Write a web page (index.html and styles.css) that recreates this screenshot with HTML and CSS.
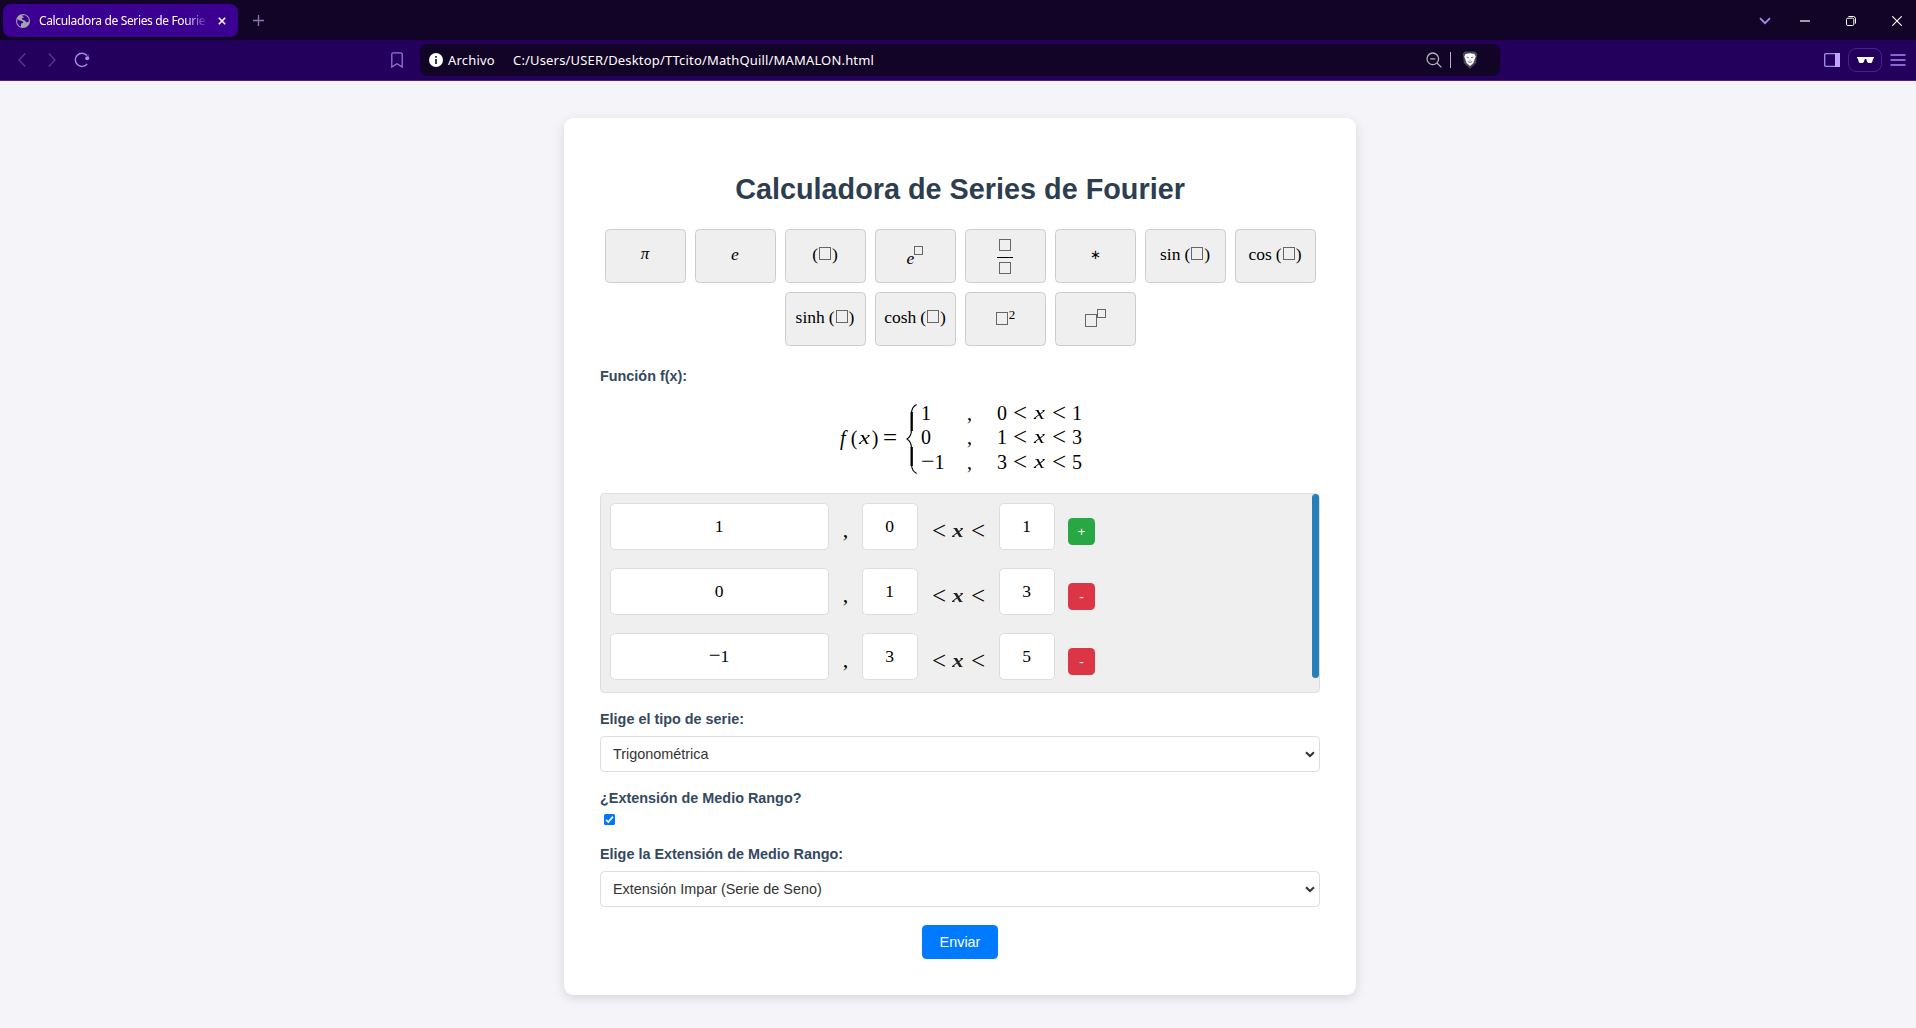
FILE: index.html
```html
<!DOCTYPE html>
<html lang="es">
<head>
<meta charset="utf-8">
<title>Calculadora de Series de Fourier</title>
<link rel="stylesheet" href="styles.css">
</head>
<body>
<header class="browser">
  <div class="tabbar">
    <div class="tab">
      <svg width="14" height="14" viewBox="0 0 14 14"><circle cx="7" cy="7" r="7" fill="#a3a1ab"/><path d="M1.3 5.2 4 6.6 6.6 7.2 7.2 9 5 9.4 5 12.6 3.4 12 1.2 9zM5.8 1.5 9.4 1.3 12.4 4 12.8 7.6 10.6 8.4 8.8 6.4 6.2 5.6 5.8 4.2 8 3.4z" fill="#3b0091"/></svg>
      <span class="tab-title">Calculadora de Series de Fourie</span>
      <svg class="tab-close" width="8" height="8" viewBox="0 0 8 8"><path d="M.8.8 7.2 7.2M7.2.8.8 7.2" stroke="#fff" stroke-width="1.6"/></svg>
    </div>
    <svg class="newtab" width="11" height="11" viewBox="0 0 11 11"><path d="M5.5 0V11M0 5.5H11" stroke="#8877b8" stroke-width="1.3"/></svg>
    <div class="window-controls">
      <svg width="12" height="8" viewBox="0 0 12 8"><path d="M1 1.2 6 6.2 11 1.2" fill="none" stroke="#a78bf5" stroke-width="1.7"/></svg>
      <svg width="10" height="2" viewBox="0 0 10 2"><path d="M0 1H10" stroke="#fff" stroke-width="1.2"/></svg>
      <svg width="10" height="10" viewBox="0 0 10 10"><rect x=".5" y="2.2" width="7.3" height="7.3" rx="1.3" fill="none" stroke="#fff"/><path d="M2.4.5H7.3Q9.5.5 9.5 2.7V7.6" fill="none" stroke="#fff"/></svg>
      <svg width="10" height="10" viewBox="0 0 10 10"><path d="M.3.3 9.7 9.7M9.7.3.3 9.7" stroke="#fff" stroke-width="1.1"/></svg>
    </div>
  </div>
  <div class="toolbar">
    <svg class="back" width="8" height="14" viewBox="0 0 8 14"><path d="M7.2.5 1 7 7.2 13.5" fill="none" stroke="#573a92" stroke-width="1.3"/></svg>
    <svg class="forward" width="8" height="14" viewBox="0 0 8 14"><path d="M.8.5 7 7 .8 13.5" fill="none" stroke="#573a92" stroke-width="1.3"/></svg>
    <svg class="reload" width="16" height="16" viewBox="0 0 16 16"><path d="M12.9 3.5A6.6 6.6 0 1 0 13.2 11.8" fill="none" stroke="#a78bf5" stroke-width="1.4"/><circle cx="13.2" cy="6.3" r="2" fill="#a78bf5"/><path d="M14.2 2V7" stroke="#a78bf5" stroke-width="1.2" opacity=".4"/></svg>
    <svg class="bookmark" width="12" height="16" viewBox="0 0 12 16"><path d="M.8 2.2Q.8.8 2.2.8H9.8Q11.2.8 11.2 2.2V15L6 11.8.8 15Z" fill="none" stroke="#9376dc" stroke-width="1.3"/></svg>
    <div class="address">
      <svg width="14" height="14" viewBox="0 0 14 14"><circle cx="7" cy="7" r="7" fill="#fff"/><path d="M7 3V4.8M7 6V11" stroke="#120427" stroke-width="1.6"/></svg>
      <span class="scheme">Archivo</span>
      <span class="url">C:/Users/USER/Desktop/TTcito/MathQuill/MAMALON.html</span>
      <svg class="lens" width="16" height="16" viewBox="0 0 16 16"><circle cx="6.8" cy="6.8" r="5.8" fill="none" stroke="#b5b1bd" stroke-width="1.3"/><path d="M4.2 6.8H9.4M11 11 15.4 15.4" stroke="#b5b1bd" stroke-width="1.3"/></svg>
      <span class="bar"></span>
      <svg class="shield" width="16" height="18" viewBox="0 0 16 18"><path d="M3 .5H13L15.4 3 14.8 5 14.2 12 8 17.8 1.8 12 1.2 5 .6 3Z" fill="#4b4858"/><path d="M3.5 3 8 2.3 12.5 3 13.7 5.5 12.6 8.6 11.4 12 8 15 4.6 12 3.4 8.6 2.3 5.5Z" fill="#fff"/><path d="M4.6 6 7 6.8M11.4 6 9 6.8M5.8 10.6 8 11.4 10.2 10.6M8 8.6V9.6" fill="none" stroke="#4b4858" stroke-width=".8"/></svg>
    </div>
    <div class="tools">
      <svg width="16" height="14" viewBox="0 0 16 14"><rect x=".7" y=".7" width="14.6" height="12.6" fill="none" stroke="#a78bf5" stroke-width="1.3" rx=".8"/><path d="M11 0H16V14H11Z" fill="#bda6ff"/></svg>
      <div class="private"><svg width="17" height="6" viewBox="0 0 17 6"><path d="M0 0H17V1.2L16.2 1.6 15.2 5 14.4 6H11.4L10.2 5 9.2 2H7.8L6.8 5 5.6 6H2.6L1.8 5 .8 1.6 0 1.2Z" fill="#fff"/></svg></div>
      <svg width="16" height="12" viewBox="0 0 16 12"><path d="M.5 1H15.5M.5 6H15.5M.5 11H15.5" stroke="#a78bf5" stroke-width="1.3"/></svg>
    </div>
  </div>
</header>
<main class="page">
  <form class="card">
    <h1>Calculadora de Series de Fourier</h1>
    <div class="keys">
      <button type="button" class="key"><i class="pi">π</i></button>
      <button type="button" class="key"><i>e</i></button>
      <button type="button" class="key"><span>(<b class="sq"></b>)</span></button>
      <button type="button" class="key low"><span><i>e</i><b class="sq sup"></b></span></button>
      <button type="button" class="key frac"><b class="sq"></b><b class="rule"></b><b class="sq"></b></button>
      <button type="button" class="key"><span class="star">∗</span></button>
      <button type="button" class="key"><span>sin<em>(</em><b class="sq"></b>)</span></button>
      <button type="button" class="key"><span>cos<em>(</em><b class="sq"></b>)</span></button>
      <button type="button" class="key"><span>sinh<em>(</em><b class="sq"></b>)</span></button>
      <button type="button" class="key"><span>cosh<em>(</em><b class="sq"></b>)</span></button>
      <button type="button" class="key low"><span><b class="sq"></b><small>2</small></span></button>
      <button type="button" class="key low"><span><b class="sq tight"></b><b class="sq sup"></b></span></button>
    </div>
    <label class="label first">Función f(x):</label>
    <div class="formula">
      <div class="lhs"><i class="fn">f</i><span class="paren">(</span><i class="var">x</i><span class="paren">)</span><span class="eq">=</span></div>
      <svg class="brace" width="11" height="70" viewBox="0 0 11 70"><path d="M10.6.6Q5.5 3 5.5 10V26Q5.5 32 1 35Q5.5 38 5.5 44V60Q5.5 67 10.6 69.4" fill="none" stroke="#000" stroke-width="1.1"/><path d="M5.7 8V27M5.7 43V62" stroke="#000" stroke-width="2.3"/></svg>
      <div class="cases">
        <span>1</span><span>,</span><span class="range"><u>0</u><u class="op">&lt;</u><i class="var">x</i><u class="op">&lt;</u><u>1</u></span>
        <span>0</span><span>,</span><span class="range"><u>1</u><u class="op">&lt;</u><i class="var">x</i><u class="op">&lt;</u><u>3</u></span>
        <span><u class="minus">−</u>1</span><span>,</span><span class="range"><u>3</u><u class="op">&lt;</u><i class="var">x</i><u class="op">&lt;</u><u>5</u></span>
      </div>
    </div>
    <div class="editor">
      <div class="rows">
        <div class="row"><div class="field wide">1</div><span class="comma">,</span><div class="field">0</div><span class="between"><u class="op">&lt;</u><i class="var">x</i><u class="op">&lt;</u></span><div class="field">1</div><button type="button" class="act add">+</button></div>
        <div class="row"><div class="field wide">0</div><span class="comma">,</span><div class="field">1</div><span class="between"><u class="op">&lt;</u><i class="var">x</i><u class="op">&lt;</u></span><div class="field">3</div><button type="button" class="act">-</button></div>
        <div class="row"><div class="field wide"><u class="minus">−</u>1</div><span class="comma">,</span><div class="field">3</div><span class="between"><u class="op">&lt;</u><i class="var">x</i><u class="op">&lt;</u></span><div class="field">5</div><button type="button" class="act">-</button></div>
      </div>
      <div class="thumb"></div>
    </div>
    <label class="label">Elige el tipo de serie:</label>
    <div class="select"><span>Trigonométrica</span><svg width="10" height="7" viewBox="0 0 10 7"><path d="M1 1.2 5 5 9 1.2" fill="none" stroke="#333" stroke-width="2"/></svg></div>
    <label class="label">¿Extensión de Medio Rango?</label>
    <svg class="check" width="11" height="11" viewBox="0 0 11 11"><rect width="11" height="11" rx="1.6" fill="#0075ff"/><path d="M2 5.8 4.3 8.1 9 2.6" fill="none" stroke="#fff" stroke-width="1.7"/></svg>
    <label class="label third">Elige la Extensión de Medio Rango:</label>
    <div class="select"><span>Extensión Impar (Serie de Seno)</span><svg width="10" height="7" viewBox="0 0 10 7"><path d="M1 1.2 5 5 9 1.2" fill="none" stroke="#333" stroke-width="2"/></svg></div>
    <button type="button" class="submit">Enviar</button>
  </form>
</main>
</body>
</html>
```
FILE: styles.css
```css
* { box-sizing: border-box; }
html, body { margin: 0; height: 100%; overflow: hidden; }
body { background: #f4f4f9; font-family: "Liberation Sans", Arial, sans-serif; }
svg { display: block; flex: none; }
u { text-decoration: none; }
button { font: inherit; padding: 0; }

/* Browser frame */
.browser { font-family: "Noto Sans", "Segoe UI", sans-serif; color: #fff; }
.tabbar { height: 40px; background: #120427; display: flex; padding: 4px 14px 3px 3px; align-items: center; }
.tab { width: 235px; height: 33px; border-radius: 8px; background: #3b0091; display: flex; align-items: center; padding: 0 12px 0 13px; }
.tab-title { width: 168px; margin-left: 9px; font-size: 12px; line-height: 16px; letter-spacing: -.35px; white-space: nowrap; overflow: hidden; -webkit-mask-image: linear-gradient(90deg, #000 146px, transparent 170px); mask-image: linear-gradient(90deg, #000 146px, transparent 170px); }
.tab-close { margin-left: 11px; }
.newtab { margin-left: 15px; }
.window-controls { margin-left: auto; display: flex; align-items: center; }
.window-controls svg:nth-child(1) { margin-right: 29px; }
.window-controls svg:nth-child(2) { margin-right: 36px; }
.window-controls svg:nth-child(3) { margin-right: 36px; }
.toolbar { height: 41px; background: #22005c; border-bottom: 1px solid #47208a; display: flex; align-items: center; padding: 0 10px 0 18px; }
.forward { margin-left: 22px; }
.reload { margin-left: 18px; }
.bookmark { margin-left: 301px; }
.address { width: 1080px; height: 32px; margin-left: 17px; background: #120427; border-radius: 8px; display: flex; align-items: center; padding-left: 9px; font-size: 13px; line-height: 18px; white-space: nowrap; }
.scheme { width: 65px; margin-left: 5px; letter-spacing: .2px; }
.url { width: 900px; letter-spacing: .17px; }
.lens { margin-left: 13px; }
.bar { width: 1px; height: 16px; background: #b5b1bd; margin: 0 11px 0 8px; }
.tools { margin-left: auto; display: flex; align-items: center; gap: 8px; }
.private { width: 34px; height: 24px; border: 1px solid #47208a; border-radius: 8px; display: flex; align-items: center; justify-content: center; }

/* Calculator card */
.page { padding: 37px 0 0 564px; }
.card { width: 792px; height: 877px; background: #fff; border-radius: 9px; box-shadow: 0 3px 11px rgba(0, 0, 0, .13); padding: 54px 36px 0; display: flex; flex-direction: column; }
h1 { margin: 0 0 23px; height: 34px; line-height: 34px; font-size: 28.8px; color: #2c3e50; text-align: center; }
.keys { display: flex; flex-wrap: wrap; justify-content: center; gap: 9px; }
.key { width: 81px; height: 54px; border: 1px solid #ccc; border-radius: 4.5px; background: #efefef; color: #000; font: 17.5px/20px "Liberation Serif", "Times New Roman", serif; display: flex; align-items: center; justify-content: center; padding-bottom: 4px; white-space: nowrap; }
.key.low { padding: 2px 0 0; }
.key em { font-style: normal; margin-left: 4px; }
.key small { font-size: 13px; position: relative; top: -6px; }
.pi { font-size: 17px; }
.star { font-size: 13px; padding-top: 1px; }
.sq { display: inline-block; width: 12px; height: 13px; border: 1px solid #666; margin: 0 1px; }
.sq.tight { margin: 0; }
.sq.sup { width: 9px; height: 9px; margin: 0 0 9px; }
.frac { flex-direction: column; padding: 0; }
.frac .sq { height: 12px; }
.rule { width: 16px; height: 1px; background: #000; margin: 6px 0 4px; }
.label { height: 16px; line-height: 16px; font-size: 14.4px; font-weight: bold; color: #34495e; margin: 18px 0 9px; }
.label.first { margin: 22px 0 0; }
.label.third { margin-top: 21px; }

.formula { height: 109px; display: flex; align-items: center; font: 20px/24px "Liberation Serif", "Times New Roman", serif; color: #000; padding-left: 240px; }
.lhs { display: flex; width: 66px; padding-bottom: 1px; }
.lhs .fn { width: 10px; }
.paren { width: 8px; text-align: center; }
.lhs .eq { font-size: 25px; margin-left: 4px; }
.var { width: 13px; font-size: 19px; text-align: center; transform: scaleX(1.3); }
.cases { display: grid; grid-template-columns: 46px 30px auto; grid-auto-rows: 24.3px; margin: -2px 0 0 4px; }
.range, .between { display: flex; }
.op { font-size: 25px; width: 14px; text-align: center; }
.range .op { margin: 0 6px; }
.minus { font-size: 24px; line-height: 0; }

.editor { height: 200px; border: 1px solid #ddd; border-radius: 4.5px; background: #efefef; display: flex; justify-content: space-between; padding-left: 9px; }
.rows { padding-top: 9px; display: flex; flex-direction: column; gap: 18px; }
.row { height: 47px; display: flex; font-family: "Liberation Serif", "Times New Roman", serif; color: #000; }
.field { width: 56px; height: 47px; border: 1px solid #ddd; border-radius: 4.5px; background: #fff; text-align: center; font-size: 17.5px; line-height: 44px; padding-right: 1px; }
.field.wide { width: 219px; }
.field .minus { font-size: 21px; }
.comma { width: 33px; text-align: center; font-size: 22px; line-height: 53px; }
.between { width: 81px; padding-left: 14px; line-height: 55px; font-size: 20px; }
.between .var { width: 14px; font-weight: bold; margin: 0 6px 0 5px; transform: scaleX(1.2); color: #222; }
.act { width: 27px; height: 27px; margin: 15px 0 0 13px; border: 0; border-radius: 4.5px; background: #dc3545; color: #fff; font: 13.5px/27px "Liberation Sans", Arial, sans-serif; }
.act.add { background: #28a745; }
.thumb { width: 7px; height: 184px; border-radius: 4px; background: #2980b9; }
.select { height: 36px; border: 1px solid #ddd; border-radius: 4.5px; background: #fff; display: flex; justify-content: space-between; align-items: center; padding: 0 4px 0 12px; font-size: 14.4px; color: #333; }
.check { margin: -1px 0 0 4px; }
.submit { width: 76px; height: 34px; margin: 18px auto 0; border: 0; border-radius: 4.5px; background: #007bff; color: #fff; font-size: 14.4px; }
```
